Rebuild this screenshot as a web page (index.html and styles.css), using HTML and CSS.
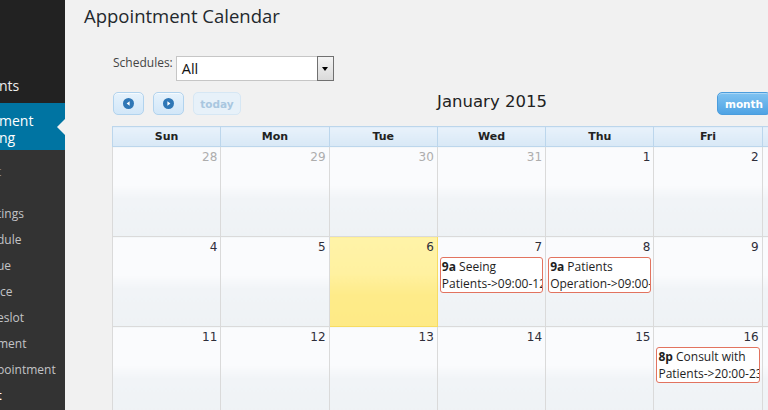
FILE: index.html
```html
<!DOCTYPE html>
<html lang="en">
<head>
<meta charset="utf-8">
<title>Appointment Calendar</title>
<link rel="stylesheet" href="styles.css">
</head>
<body>
<div class="layout">
  <nav class="sidebar">
    <div class="menu-top">
      <div class="menu-item">nts</div>
    </div>
    <div class="menu-current">
      <span>ment<br>ng</span>
      <i class="menu-arrow"></i>
    </div>
    <ul class="submenu">
      <li class="sub-first">t</li>
      <li>tings</li>
      <li>dule</li>
      <li>ue</li>
      <li>ice</li>
      <li>eslot</li>
      <li>ment</li>
      <li>pointment</li>
      <li class="sub-current">t</li>
    </ul>
  </nav>

  <main class="main">
    <h1 class="page-title">Appointment Calendar</h1>
    <div class="wrap">
      <div class="schedules">
        <span class="sched-label">Schedules:</span>
        <div class="select">
          <span class="select-value">All</span>
          <span class="select-btn"><i class="select-caret"></i></span>
        </div>
      </div>

      <div class="toolbar">
        <div class="tb-left">
          <button class="btn btn-icon" type="button" aria-label="prev">
            <svg width="11" height="11" viewBox="0 0 11 11"><circle cx="5.5" cy="5.5" r="5.5" fill="#2f77b6"/><polygon points="3.6,5.5 6.6,3.3 6.6,7.7" fill="#fff"/></svg>
          </button>
          <button class="btn btn-icon" type="button" aria-label="next">
            <svg width="11" height="11" viewBox="0 0 11 11"><circle cx="5.5" cy="5.5" r="5.5" fill="#2f77b6"/><polygon points="7.4,5.5 4.4,3.3 4.4,7.7" fill="#fff"/></svg>
          </button>
          <button class="btn btn-today" type="button">today</button>
        </div>
        <h2 class="cal-title">January 2015</h2>
        <div class="tb-right">
          <button class="btn btn-active btn-month" type="button">month</button>
          <button class="btn btn-week" type="button">week</button>
          <button class="btn btn-day" type="button">day</button>
        </div>
      </div>

      <table class="cal">
        <thead>
          <tr><th>Sun</th><th>Mon</th><th>Tue</th><th>Wed</th><th>Thu</th><th>Fri</th><th>Sat</th></tr>
        </thead>
        <tbody>
          <tr>
            <td class="other"><div class="num">28</div></td>
            <td class="other"><div class="num">29</div></td>
            <td class="other"><div class="num">30</div></td>
            <td class="other"><div class="num">31</div></td>
            <td><div class="num">1</div></td>
            <td><div class="num">2</div></td>
            <td><div class="num">3</div></td>
          </tr>
          <tr>
            <td><div class="num">4</div></td>
            <td><div class="num">5</div></td>
            <td class="today"><div class="num">6</div></td>
            <td><div class="num">7</div>
              <div class="event"><b>9a</b> Seeing <span class="nw">Patients-&gt;09:00-12:00</span></div></td>
            <td><div class="num">8</div>
              <div class="event"><b>9a</b> Patients <span class="nw">Operation-&gt;09:00-12:00</span></div></td>
            <td><div class="num">9</div></td>
            <td><div class="num">10</div></td>
          </tr>
          <tr>
            <td><div class="num">11</div></td>
            <td><div class="num">12</div></td>
            <td><div class="num">13</div></td>
            <td><div class="num">14</div></td>
            <td><div class="num">15</div></td>
            <td><div class="num">16</div>
              <div class="event"><b>8p</b> Consult with <span class="nw">Patients-&gt;20:00-23:00</span></div></td>
            <td><div class="num">17</div></td>
          </tr>
        </tbody>
      </table>
    </div>
  </main>
</div>
</body>
</html>
```
FILE: styles.css
```css
html, body {
  margin: 0;
  height: 100%;
  overflow: hidden;
}
body {
  background: #f1f1f1;
  font-family: "Open Sans", sans-serif;
}
.layout {
  display: flex;
  height: 410px;
}

/* sidebar */
.sidebar {
  width: 65px;
  flex: none;
  background: #222;
  overflow: hidden;
  display: flex;
  flex-direction: column;
}
.menu-top {
  height: 103px;
  display: flex;
  flex-direction: column;
  justify-content: flex-end;
}
.menu-item {
  color: #eee;
  font-size: 14px;
  line-height: 18px;
  padding-bottom: 8px;
  margin-left: -1px;
  white-space: nowrap;
}
.menu-current {
  position: relative;
  background: #0074a2;
  color: #fff;
  height: 47px;
  box-sizing: border-box;
  padding-top: 9px;
  font-size: 14px;
  line-height: 17px;
  margin-left: -1px;
}
.menu-arrow {
  position: absolute;
  right: 0;
  top: 16px;
  width: 0;
  height: 0;
  border: 8px solid transparent;
  border-right-color: #f1f1f1;
  border-left-width: 0;
}
.submenu {
  flex: 1;
  background: #333;
  list-style: none;
  margin: 0;
  padding: 9px 0 0;
}
.submenu li {
  color: #c3c4c7;
  font-size: 12px;
  line-height: 26px;
  margin-left: -3px;
  white-space: nowrap;
}
.submenu .sub-first {
  color: #8f9093;
  margin-bottom: 16px;
}
.submenu .sub-current {
  color: #fff;
  font-weight: 600;
}

/* main */
.main {
  flex: 1;
  padding-left: 19px;
  min-width: 0;
}
.page-title {
  margin: 3px 0 0;
  font-size: 18.5px;
  line-height: 25px;
  font-weight: 400;
  color: #23282d;
}
.wrap {
  margin-left: 28px;
  width: 759px;
}
.schedules {
  display: flex;
  align-items: flex-start;
  margin-top: 28px;
}
.sched-label {
  font-size: 12px;
  line-height: 16px;
  color: #444;
  margin: -1px 3px 0 1px;
}
.select {
  width: 158px;
  height: 25px;
  box-sizing: border-box;
  display: flex;
  background: #fff;
  border: 1px solid #c6c6c6;
  border-right: 0;
}
.select-value {
  flex: 1;
  padding-left: 5px;
  font-size: 14.5px;
  line-height: 23px;
  color: #111;
}
.select-btn {
  width: 17px;
  height: 25px;
  margin-top: -1px;
  box-sizing: border-box;
  border: 1px solid #707070;
  background: linear-gradient(#f4f4f4, #dadada);
  display: flex;
  align-items: center;
  justify-content: center;
}
.select-caret {
  width: 0;
  height: 0;
  border-top: 4px solid #000;
  border-left: 3.5px solid transparent;
  border-right: 3.5px solid transparent;
}

/* toolbar */
.toolbar {
  display: flex;
  align-items: flex-start;
  margin-top: 11px;
}
.tb-left {
  flex: 1;
  display: flex;
  gap: 9px;
  margin-left: 1px;
}
.tb-right {
  flex: 1;
  display: flex;
  justify-content: flex-end;
}
.cal-title {
  margin: 0;
  font-family: "DejaVu Sans", sans-serif;
  font-size: 16.5px;
  line-height: 19px;
  font-weight: 400;
  color: #222;
}
.btn {
  height: 23px;
  box-sizing: border-box;
  border: 1px solid #b1d3ee;
  border-radius: 5px;
  background: linear-gradient(#e6f2fc, #d2e7f8);
  box-shadow: inset 0 1px 0 rgba(255,255,255,.6);
  font-family: "DejaVu Sans", sans-serif;
  font-weight: 700;
  font-size: 10.5px;
  color: #2e6e9e;
  padding: 0;
  display: flex;
  align-items: center;
  justify-content: center;
}
.btn-icon {
  width: 31px;
}
.btn-today {
  width: 48px;
  color: #a9c7e0;
  background: #e7f1f9;
  border-color: #d6e7f4;
  box-shadow: none;
}
.btn-month { width: 54px; }
.btn-week { width: 52px; }
.btn-day { width: 48px; }
.btn-active {
  background: linear-gradient(#80c3f1, #4fa3e4);
  border-color: #4b9ddd;
  color: #fff;
  box-shadow: inset 0 1px 0 rgba(255,255,255,.35);
}

/* calendar grid */
.cal {
  margin-top: 11px;
  width: 759px;
  table-layout: fixed;
  border-collapse: collapse;
}
.cal th {
  height: 20px;
  padding: 0;
  box-sizing: border-box;
  border: 1px solid #bcd6ec;
  background: linear-gradient(#e8f2fb, #d8e8f6);
  font-family: "DejaVu Sans", sans-serif;
  font-size: 11px;
  font-weight: 700;
  line-height: 18px;
  color: #222;
}
.cal td {
  height: 89px;
  padding: 0;
  vertical-align: top;
  border: 1px solid #dadada;
  background: linear-gradient(#fafbfd 0, #fafbfd 42%, #f1f4f7 58%, #eef2f5 100%);
}
.cal td.today {
  border-color: #f7dc62;
  background: linear-gradient(#fff3a8 0, #fff1a0 40%, #feeb89 65%, #feea86 100%);
}
.num {
  text-align: right;
  padding: 2px 3px 0 0;
  font-family: "DejaVu Sans", sans-serif;
  font-size: 12px;
  line-height: 16px;
  color: #2e2e3a;
}
.other .num {
  color: #adadad;
}
.event {
  margin: 2px 2px 0;
  border: 1px solid #e2735f;
  border-radius: 3px;
  background: #fff;
  padding-left: 1px;
  overflow: hidden;
  font-family: "Open Sans", sans-serif;
  font-size: 12px;
  line-height: 17px;
  color: #1e1e1e;
}
.event b {
  font-weight: 700;
}
.nw {
  white-space: nowrap;
}
```
